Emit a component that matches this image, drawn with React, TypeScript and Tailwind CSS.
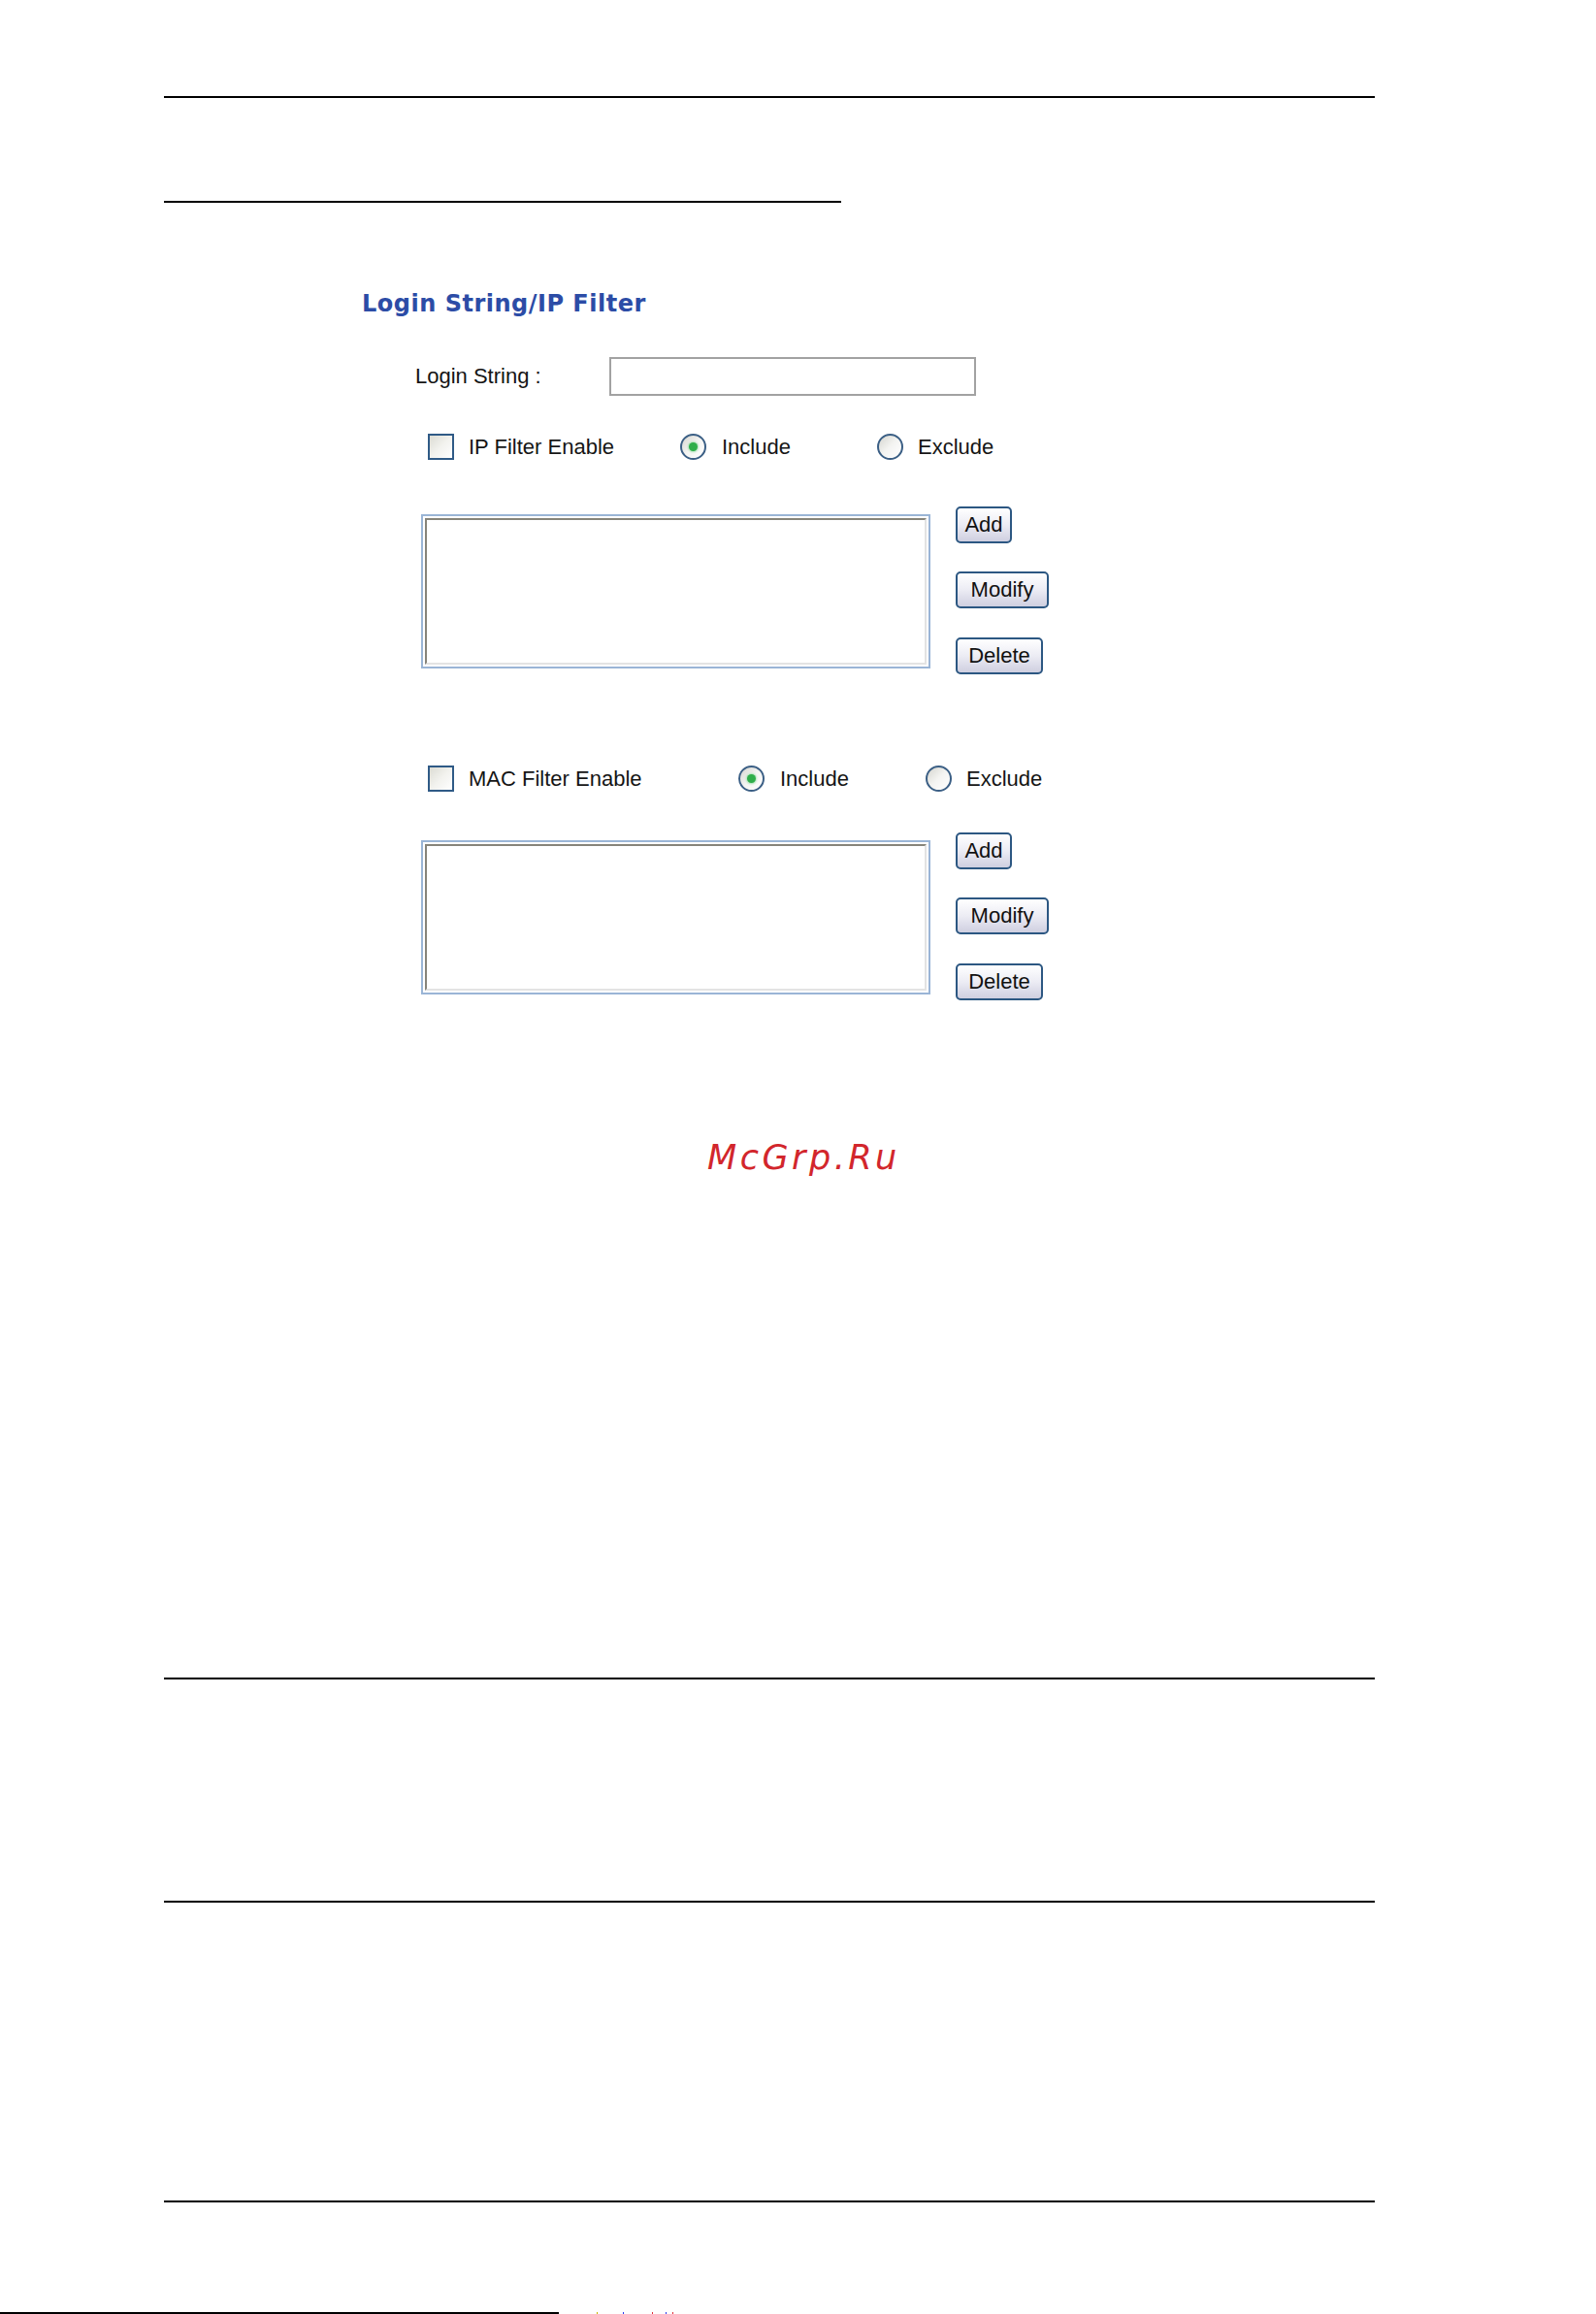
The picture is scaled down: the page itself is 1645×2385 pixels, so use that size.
import React from "react";

const sans = "font-['Liberation_Sans',Arial,sans-serif]";

function Checkbox() {
  return (
    <span className="block w-[27px] h-[27px] shrink-0 border-2 border-[#2f5a86] bg-gradient-to-br from-[#dcdcd4] via-[#f2f2ee] to-white" />
  );
}

function Radio({ checked }: { checked?: boolean }) {
  return (
    <span className="flex items-center justify-center w-[27px] h-[27px] shrink-0 rounded-full border-2 border-[#3b5f85] bg-gradient-to-br from-[#d6d6d0] via-[#f4f4f2] to-white">
      {checked && (
        <span className="block w-[9px] h-[9px] rounded-full bg-[#2fae4a] shadow-[0_0_2px_1px_#a9e3b4]" />
      )}
    </span>
  );
}

function Button({ label, width }: { label: string; width: string }) {
  return (
    <button
      type="button"
      className={`${width} h-[38px] flex items-center justify-center rounded-[5px] border-2 border-[#2c5782] bg-gradient-to-b from-white via-[#ececf4] to-[#cfcfe0] text-[22px] leading-none text-[#111] ${sans}`}
    >
      {label}
    </button>
  );
}

function FilterRow({
  label,
  first,
  second,
}: {
  label: string;
  first: string;
  second: string;
}) {
  return (
    <div className={`flex items-center h-[27px] ml-[68px] text-[22px] leading-none text-[#151515] ${sans}`}>
      <div className={`${first} flex items-center gap-[15px]`}>
        <Checkbox />
        <span>{label}</span>
      </div>
      <div className={`${second} flex items-center gap-[16px]`}>
        <Radio checked />
        <span>Include</span>
      </div>
      <div className="flex items-center gap-[15px]">
        <Radio />
        <span>Exclude</span>
      </div>
    </div>
  );
}

function ListBlock({ top }: { top: string }) {
  return (
    <div className={`flex ${top} ml-[61px]`}>
      <div className="mt-[8px] w-[525px] h-[159px] border-2 border-[#9ab5d6] p-[2px] bg-white">
        <div className="h-full w-full border-2 border-t-[#86847a] border-l-[#86847a] border-r-[#e3e3e3] border-b-[#e3e3e3] bg-white" />
      </div>
      <div className="ml-[26px] flex flex-col">
        <Button label="Add" width="w-[58px]" />
        <div className="mt-[29px]">
          <Button label="Modify" width="w-[96px]" />
        </div>
        <div className="mt-[30px]">
          <Button label="Delete" width="w-[90px]" />
        </div>
      </div>
    </div>
  );
}

export default function App() {
  return (
    <div className="relative w-[1645px] h-[2385px] bg-white overflow-hidden flex flex-col">
      <div className="flex flex-col pl-[169px] pt-[99px]">
        <div className="h-[2px] w-[1248px] bg-black" />
        <div className="mt-[106px] h-[2px] w-[698px] bg-black" />

        <section className="ml-[204px] mt-[92px] flex flex-col">
          <h2 className="h-[24px] text-[24px] leading-[24px] font-bold tracking-[0.5px] text-[#2c4ca6] font-['DejaVu_Sans',Verdana,sans-serif] whitespace-nowrap">
            Login String/IP Filter
          </h2>

          <div className={`mt-[43px] ml-[55px] flex items-center h-[40px] text-[22px] leading-none text-[#151515] ${sans}`}>
            <label className="w-[200px]">Login String :</label>
            <div className="w-[378px] h-[40px] border-2 border-[#a2a2a2] bg-white" />
          </div>

          <div className="mt-[39px]">
            <FilterRow label="IP Filter Enable" first="w-[260px]" second="w-[203px]" />
          </div>
          <ListBlock top="mt-[48px]" />

          <div className="mt-[94px]">
            <FilterRow label="MAC Filter Enable" first="w-[320px]" second="w-[193px]" />
          </div>
          <ListBlock top="mt-[42px]" />
        </section>

        <p className="mt-[145px] ml-[560px] h-[35px] text-[35px] leading-[35px] italic tracking-[3.5px] text-[#d2262c] font-['DejaVu_Sans',sans-serif] whitespace-nowrap">
          McGrp.Ru
        </p>

        <div className="mt-[518px] h-[2px] w-[1248px] bg-black" />
        <div className="mt-[228px] h-[2px] w-[1248px] bg-black" />
        <div className="mt-[307px] h-[2px] w-[1248px] bg-black" />
      </div>

      <div className="mt-auto flex items-end h-[2px]">
        <div className="h-[2px] w-[576px] bg-black" />
        <span className="ml-[39px] h-[2px] w-[1px] bg-[#c9b400]" />
        <span className="ml-[26px] h-[2px] w-[1px] bg-[#2a3cf0]" />
        <span className="ml-[29px] h-[2px] w-[1px] bg-[#e0303a]" />
        <span className="ml-[13px] h-[2px] w-[1px] bg-[#2a3cf0]" />
        <span className="ml-[6px] h-[2px] w-[1px] bg-[#e0303a]" />
      </div>
    </div>
  );
}
